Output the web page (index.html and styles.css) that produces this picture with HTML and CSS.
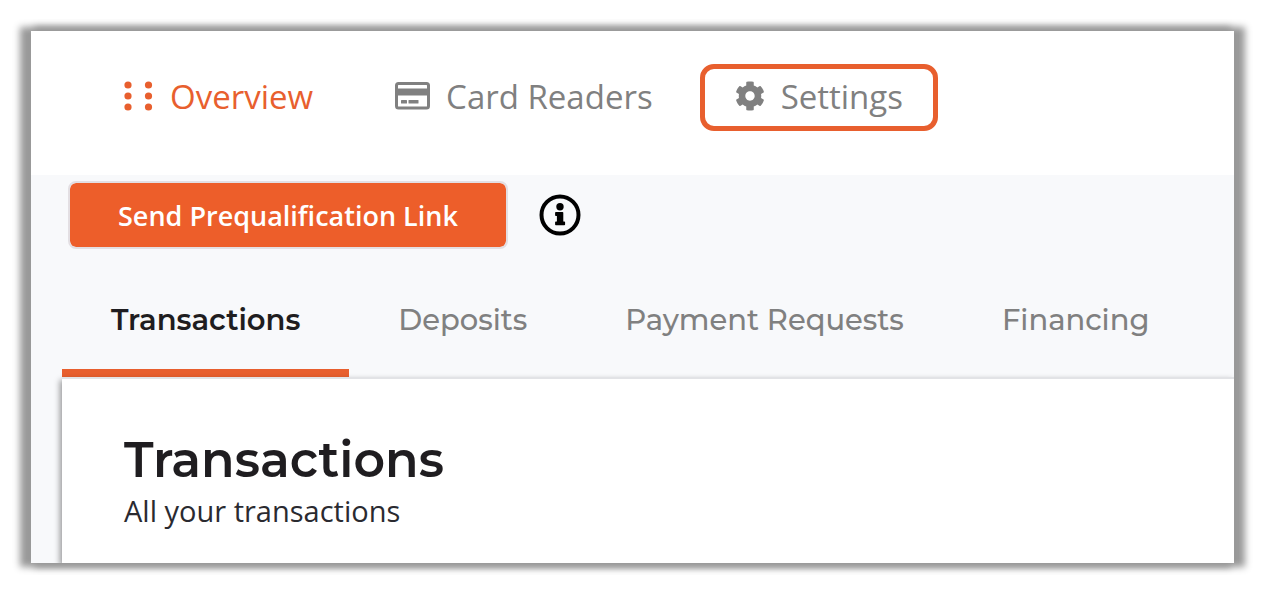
FILE: index.html
```html
<!DOCTYPE html>
<html lang="en">
  <head>
    <meta charset="UTF-8" />
    <meta name="viewport" content="width=device-width, initial-scale=1.0" />
    <title>Transactions</title>
    <link rel="stylesheet" href="styles.css">
  </head>
  <body>
    <div class="frame">
      <nav class="main-nav">
        <a href="#overview" class="nav-link active">
          <svg width="31" height="32" viewBox="0 0 31 32" fill="currentColor" aria-hidden="true">
            <circle cx="5" cy="5" r="3.6" />
            <circle cx="5" cy="16" r="3.6" />
            <circle cx="5" cy="27" r="3.6" />
            <circle cx="25.500" cy="5" r="3.6" />
            <circle cx="25.500" cy="16" r="3.6" />
            <circle cx="25.500" cy="27" r="3.6" />
          </svg>
          Overview
        </a>
        <a href="#readers" class="nav-link">
          <svg width="35" height="28" viewBox="0 0 35 28" fill="currentColor" aria-hidden="true">
            <rect x="1.5" y="1.5" width="32" height="24.5" rx="2" fill="none" stroke="currentColor" stroke-width="3" />
            <rect x="2" y="6.5" width="31" height="7" />
            <rect x="6" y="18" width="6" height="3.5" rx="0.5" />
            <rect x="13.5" y="18" width="10" height="3.5" rx="0.5" />
          </svg>
          Card Readers
        </a>
        <a href="#settings" class="nav-link highlighted">
          <svg width="30" height="30" viewBox="0 0 512 512" fill="currentColor" aria-hidden="true">
            <path d="M487.4 315.7l-42.6-24.6c4.300-23.200 4.300-47 0-70.200l42.600-24.600c4.900-2.800 7.100-8.600 5.500-14-11.100-35.600-30-67.800-54.700-94.600-3.800-4.100-10-5.100-14.800-2.300L380.800 110c-17.900-15.400-38.500-27.300-60.800-35.100V25.800c0-5.600-3.900-10.500-9.400-11.700-36.700-8.200-74.300-7.800-109.200 0-5.500 1.200-9.400 6.100-9.400 11.700V75c-22.200 7.900-42.800 19.800-60.800 35.100L88.700 85.500c-4.900-2.800-11-1.900-14.800 2.300-24.700 26.700-43.600 58.900-54.700 94.600-1.700 5.400.6 11.200 5.500 14L67.300 221c-4.300 23.200-4.300 47 0 70.200l-42.600 24.600c-4.900 2.800-7.100 8.600-5.500 14 11.100 35.600 30 67.800 54.700 94.600 3.800 4.100 10 5.100 14.800 2.300l42.600-24.600c17.900 15.400 38.500 27.300 60.800 35.100v49.200c0 5.600 3.900 10.500 9.400 11.700 36.700 8.200 74.300 7.800 109.200 0 5.500-1.200 9.400-6.100 9.400-11.700v-49.200c22.200-7.900 42.800-19.800 60.800-35.100l42.600 24.600c4.900 2.800 11 1.900 14.800-2.300 24.700-26.700 43.600-58.900 54.700-94.600 1.500-5.500-.7-11.300-5.600-14.100zM256 336c-44.100 0-80-35.900-80-80s35.900-80 80-80 80 35.900 80 80-35.900 80-80 80z" />
          </svg>
          Settings
        </a>
      </nav>

      <main class="content">
        <div class="actions">
          <button type="button" class="send-btn">Send Prequalification Link</button>
          <button type="button" class="info-btn" aria-label="Information">
            <svg width="42" height="42" viewBox="0 0 42 42" fill="currentColor" aria-hidden="true">
              <circle cx="21" cy="21" r="18.500" fill="none" stroke="currentColor" stroke-width="4" />
              <circle cx="21" cy="12.800" r="3.700" />
              <path d="M17.500 18h6a.8.8 0 0 1 .8.8V27.500h1a.8.8 0 0 1 .8.8v2.200a.8.8 0 0 1-.8.8h-8.400a.8.8 0 0 1-.8-.8v-2.200a.8.8 0 0 1 .8-.8h1v-5.500h-1a.8.8 0 0 1-.8-.8V18.800a.8.8 0 0 1 .8-.8z" />
            </svg>
          </button>
        </div>

        <div class="tabs">
          <button type="button" class="tab active">Transactions</button>
          <button type="button" class="tab">Deposits</button>
          <button type="button" class="tab">Payment Requests</button>
          <button type="button" class="tab">Financing</button>
        </div>

        <section class="panel">
          <h1>Transactions</h1>
          <p>All your transactions</p>
        </section>
      </main>
    </div>
  </body>
</html>
```

FILE: styles.css
```css
/* General styling */
* {
  box-sizing: border-box;
}

body {
  display: flex;
  min-height: 100vh;
  margin: 0;
  padding: 31px 36px 29px 31px;
  font-family: "Open Sans", sans-serif;
  background-color: #fff;
}

.frame {
  display: flex;
  flex: 1;
  flex-direction: column;
  min-width: 0;
  background-color: #fff;
  box-shadow: -7px 0 7px 4px #999, 7px 0 7px 4px #999;
}

button {
  border: none;
  cursor: pointer;
}

/* Navigation */
.main-nav {
  display: flex;
  gap: 12px;
  padding: 33px 57px 44px;
}

.nav-link {
  display: flex;
  align-items: center;
  gap: 16px;
  height: 67px;
  padding: 0 30px 2px;
  border: 5px solid transparent;
  border-radius: 14px;
  color: #808080;
  font-size: 33px;
  text-decoration: none;
  white-space: nowrap;
}

.nav-link svg {
  margin-bottom: 2px;
}

.nav-link.active {
  color: #e85f2e;
}

.nav-link.highlighted {
  border-color: #e85f2e;
}

/* Content */
.content {
  display: flex;
  flex: 1;
  flex-direction: column;
  overflow: hidden;
  padding: 6px 0 0 31px;
  background-color: #f8f9fb;
}

.actions {
  display: flex;
  align-items: center;
  gap: 31px;
  padding-left: 6px;
}

.send-btn {
  height: 68px;
  padding: 0 48px;
  border: 2px solid #e3dfe3;
  border-radius: 8px;
  background-color: #ed5e2a;
  background-clip: padding-box;
  color: #fff;
  font-family: "Open Sans", sans-serif;
  font-size: 27px;
  font-weight: 600;
}

.info-btn {
  display: flex;
  padding: 0;
  background: none;
  color: #000;
}

.tabs {
  display: flex;
  margin-top: 14px;
}

.tab {
  height: 114px;
  padding: 6px 49px 0;
  border-bottom: 8px solid transparent;
  background: none;
  color: #808080;
  font-family: Montserrat, Inter, sans-serif;
  font-size: 29px;
  font-weight: 500;
  white-space: nowrap;
}

.tab.active {
  border-color: #e85f2e;
  color: #1f1d20;
  font-weight: 600;
}

.panel {
  flex: 1;
  padding: 49px 62px 24px;
  border-top: 2px solid #e2e3e6;
  background-color: #fff;
  box-shadow: -2px 3px 6px rgba(0, 0, 0, 0.4);
}

.panel h1 {
  margin: 0;
  color: #1f1d20;
  font-family: Montserrat, Inter, sans-serif;
  font-size: 49px;
  font-weight: 600;
  line-height: 64px;
}

.panel p {
  margin: 0;
  color: #2a2a30;
  font-size: 29px;
  line-height: 38px;
}
```
